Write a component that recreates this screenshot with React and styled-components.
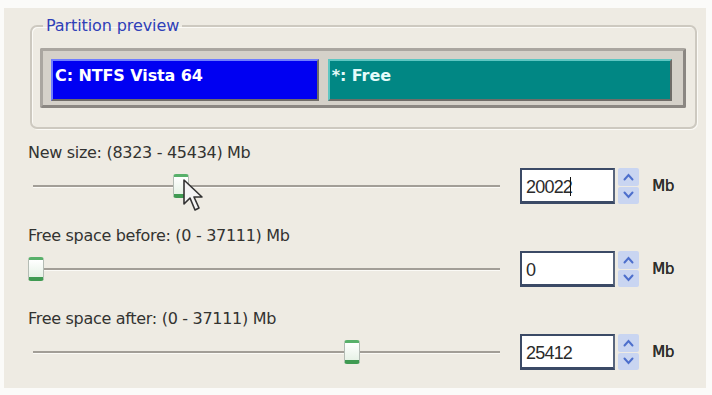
import React from 'react';
import styled, { createGlobalStyle } from 'styled-components';

const GlobalStyle = createGlobalStyle`
  html, body {
    margin: 0;
    padding: 0;
    background: #fbfbf9;
  }
  body {
    font-family: 'DejaVu Sans', 'Liberation Sans', sans-serif;
  }
`;

const Panel = styled.div`
  margin: 8px 6px 0 4px;
  height: 380px;
  box-sizing: border-box;
  background: #eeebe3;
  padding: 0 0 0 24px;
  display: flex;
  flex-direction: column;
`;

const GroupBox = styled.fieldset`
  margin: 9px 9px 0 2px;
  padding: 13px 9px 19px 8px;
  border: 2px solid #cdc9c0;
  border-radius: 7px;
  box-shadow: inset 1px 1px 0 #fbfaf6, 1px 1px 0 #fbfaf6;
`;

const Legend = styled.legend`
  padding: 0 3px;
  margin-left: 3px;
  font-size: 16px;
  line-height: 18px;
  color: #2f3fb8;
  letter-spacing: -0.1px;
`;

const PartitionFrame = styled.div`
  display: flex;
  gap: 9px;
  height: 60px;
  box-sizing: border-box;
  padding: 8px 11px 4px 8px;
  background: #d5d1c9;
  border: 3px solid;
  border-color: #aaa6a0 #8b8782 #8b8782 #aaa6a0;
  border-radius: 2px;
`;

const Partition = styled.div`
  flex: ${p => p.$grow};
  box-sizing: border-box;
  padding: 6px 0 0 2px;
  background: ${p => p.$color};
  border-top: 2px solid ${p => p.$light};
  border-left: 2px solid ${p => p.$light};
  border-bottom: 2px solid #6f6c68;
  border-right: 2px solid #6f6c68;
  color: ${p => p.$text};
  font-weight: bold;
  font-size: 16px;
  line-height: 18px;
  letter-spacing: -0.1px;
`;

const Section = styled.div`
  display: flex;
  flex-direction: column;
  gap: 6px;
  margin-top: ${p => p.$top}px;
`;

const Label = styled.div`
  font-size: 16px;
  line-height: 18px;
  color: #333331;
  letter-spacing: -0.3px;
`;

const Row = styled.div`
  display: flex;
  align-items: center;
  height: 36px;
`;

const Slider = styled.div`
  position: relative;
  width: 477px;
  height: 36px;
`;

const Track = styled.div`
  position: absolute;
  left: 5px;
  right: 5px;
  top: 17px;
  height: 2px;
  background: #a29e97;
  box-shadow: 0 1px 0 #fbfaf6;
`;

const Thumb = styled.div`
  position: absolute;
  top: 6px;
  width: 16px;
  height: 24px;
  box-sizing: border-box;
  border-radius: 3px;
  border-top: 3px solid #58b06a;
  border-bottom: 4px solid #3f9a52;
  border-left: 1px solid #b4bcb5;
  border-right: 1px solid #b4bcb5;
  background: linear-gradient(#ffffff, #e6f2e6);
`;

const Cursor = styled.svg`
  position: absolute;
  top: 11px;
  pointer-events: none;
`;

const Input = styled.div`
  margin-left: 15px;
  width: 95px;
  height: 36px;
  box-sizing: border-box;
  border: 2px solid #3b4a66;
  border-right-color: #59667d;
  border-bottom-width: 3px;
  background: #ffffff;
  padding: 7px 0 0 4px;
  font-family: 'Liberation Sans', sans-serif;
  font-size: 18px;
  line-height: 20px;
  color: #2b2b2b;
  letter-spacing: -0.8px;
`;

const Caret = styled.span`
  display: inline-block;
  width: 1px;
  height: 19px;
  background: #111;
  vertical-align: -3px;
  margin-left: -2px;
`;

const Spin = styled.div`
  margin-left: 3px;
  width: 21px;
  height: 36px;
  display: flex;
  flex-direction: column;
  gap: 1px;
`;

const SpinHalf = styled.div`
  flex: 1;
  background: #c9d5f1;
  border-radius: 2px;
  display: flex;
  align-items: center;
  justify-content: center;
`;

const Unit = styled.div`
  margin-left: 13px;
  font-size: 15px;
  color: #2e2e2c;
  letter-spacing: -0.3px;
  text-shadow: 0.4px 0 0 #2e2e2c;
`;

const Chevron = ({ up }) => (
  <svg width="11" height="8" viewBox="0 0 11 8">
    <path
      d={up ? 'M1.5 6.5 L5.5 2 L9.5 6.5' : 'M1.5 1.5 L5.5 6 L9.5 1.5'}
      fill="none"
      stroke="#4d6fcc"
      strokeWidth="2"
      strokeLinecap="round"
    />
  </svg>
);

const SLIDE = 477 - 16;

function SizeRow({ label, value, min, max, top, caret, cursor }) {
  const left = Math.round(((value - min) / (max - min)) * SLIDE);
  return (
    <Section $top={top}>
      <Label>{label}</Label>
      <Row>
        <Slider>
          <Track />
          <Thumb style={{ left }} />
          {cursor && (
            <Cursor width="24" height="34" viewBox="0 0 24 34" style={{ left: left + 10 }}>
              <path
                d="M1 1 L1 25 L7 19 L12 31 L16 29 L11 18 L19 18 Z"
                fill="#f4f4f4"
                stroke="#333"
                strokeWidth="1.6"
                strokeLinejoin="round"
              />
            </Cursor>
          )}
        </Slider>
        <Input>
          {value}
          {caret && <Caret />}
        </Input>
        <Spin>
          <SpinHalf>
            <Chevron up />
          </SpinHalf>
          <SpinHalf>
            <Chevron />
          </SpinHalf>
        </Spin>
        <Unit>Mb</Unit>
      </Row>
    </Section>
  );
}

export default function App() {
  return (
    <>
      <GlobalStyle />
      <Panel>
        <GroupBox>
          <Legend>Partition preview</Legend>
          <PartitionFrame>
            <Partition $grow={267} $color="#0000f2" $light="#6f7dff" $text="#ffffff">
              C: NTFS Vista 64
            </Partition>
            <Partition $grow={345} $color="#018784" $light="#5fc6c2" $text="#e4fbfa">
              *: Free
            </Partition>
          </PartitionFrame>
        </GroupBox>

        <SizeRow
          top={15}
          label="New size: (8323 - 45434) Mb"
          value={20022}
          min={8323}
          max={45434}
          caret
          cursor
        />
        <SizeRow
          top={23}
          label="Free space before: (0 - 37111) Mb"
          value={0}
          min={0}
          max={37111}
        />
        <SizeRow
          top={23}
          label="Free space after: (0 - 37111) Mb"
          value={25412}
          min={0}
          max={37111}
        />
      </Panel>
    </>
  );
}
